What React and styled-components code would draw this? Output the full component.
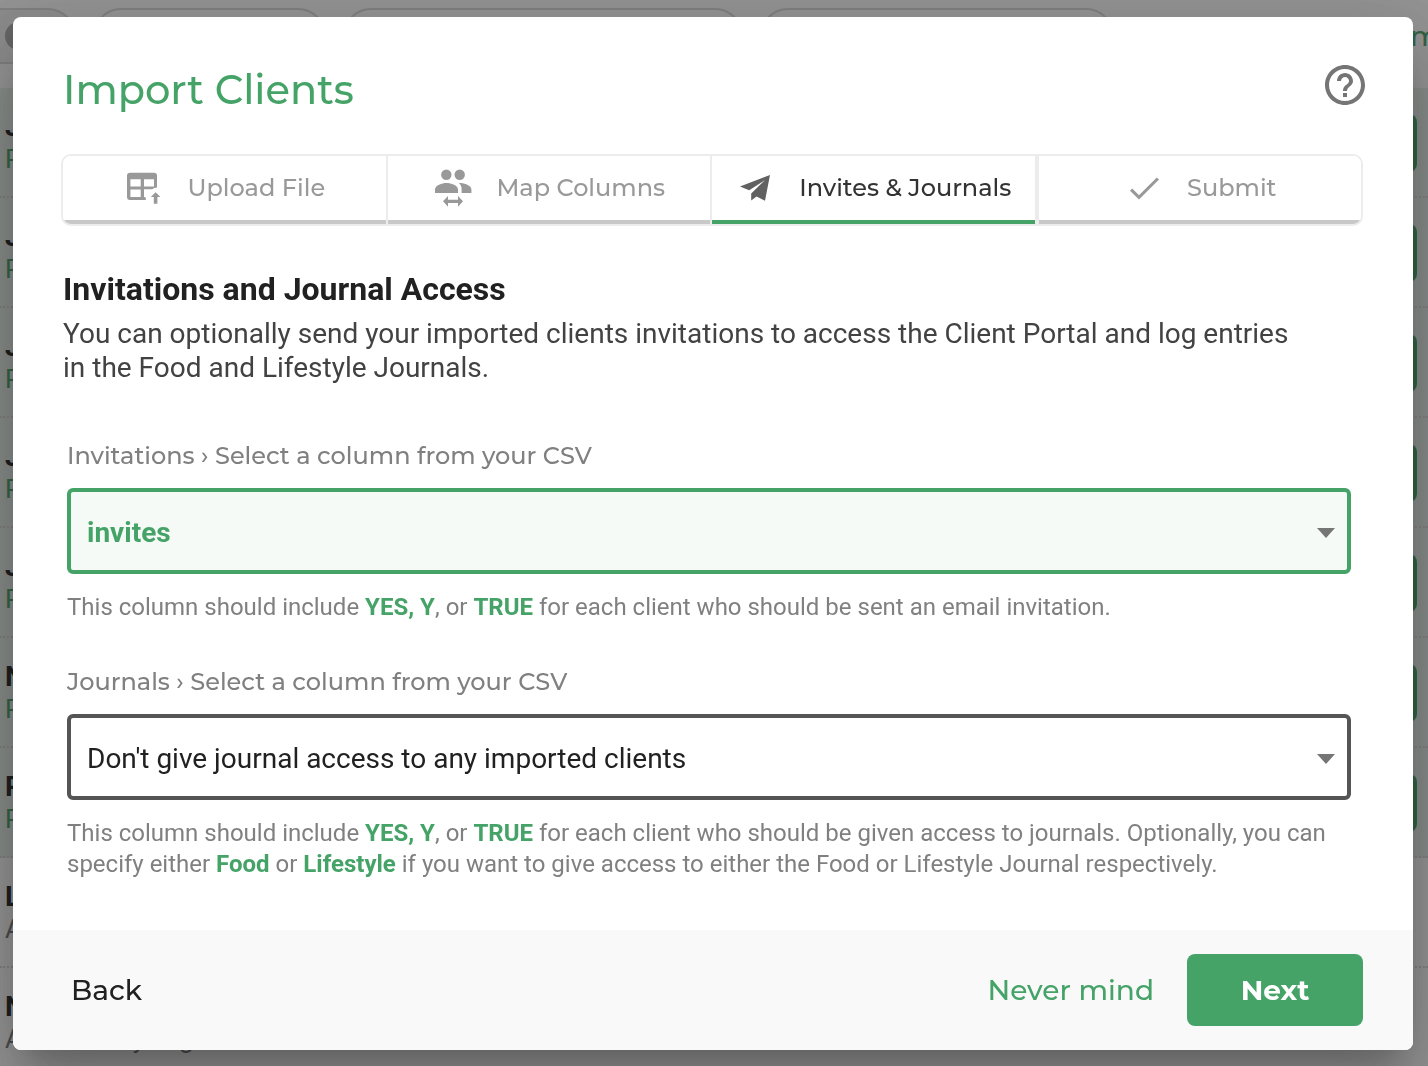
import React from "react";
import styled, { createGlobalStyle } from "styled-components";
import { MdHelpOutline } from "react-icons/md";

const green = "#45a368";
const headingFont = `"Montserrat", "Inter", sans-serif`;
const bodyFont = `"Roboto", sans-serif`;

const GlobalStyle = createGlobalStyle`
  * {
    box-sizing: border-box;
  }

  body {
    margin: 0;
    background: #fff;
    color: #212121;
    font-family: ${bodyFont};
  }

  button, select {
    margin: 0;
    font: inherit;
    cursor: pointer;
  }
`

/* Client list behind the dialog */
const Page = styled.div`
  height: 100vh;
  overflow: hidden;
`
const FilterBar = styled.div`
  display: flex;
  gap: 17px;
  height: 88px;
  padding-top: 8px;
`
const Chip = styled.div`
  flex: 0 1 ${({basis}) => basis}px;
  display: flex;
  align-items: center;
  height: 56px;
  padding-left: 5px;
  border: 2px solid #d8d8d8;
  border-left-width: ${({open}) => open ? 0 : "2px"};
  border-radius: ${({open}) => open ? "0 28px 28px 0" : "28px"};
  background: ${({open}) => open ? "#f0f0f0" : "#fff"};
`
const ChipRemove = styled.span`
  width: 28px;
  height: 28px;
  border-radius: 50%;
  background: #a6a6a6;
`
const MoreLink = styled.a`
  flex: none;
  width: 18px;
  margin-left: auto;
  color: ${green};
  font: 500 28px/56px ${headingFont};
  text-decoration: none;
`
const ClientRow = styled.div`
  display: flex;
  justify-content: space-between;
  align-items: center;
  height: 110px;
  padding: 2px 11px 0 5px;
  border-bottom: 2px dotted #dcd6d6;
  background: ${({pending}) => pending ? "#e8f1ec" : "#fff"};
`
const ClientName = styled.div`
  font-size: 28px;
  font-weight: 700;
  line-height: 32px;
`
const ClientStatus = styled.div`
  color: ${({pending}) => pending ? green : "#757575"};
  font-size: 26px;
  line-height: 32px;
`
const InviteBlock = styled.div`
  width: 140px;
  height: 58px;
  border-radius: 8px;
  background: ${green};
`

const Overlay = styled.div`
  position: fixed;
  inset: 0;
  padding: 17px 15px 16px 13px;
  overflow: auto;
  background: rgba(33, 33, 33, 0.48);
`
const Modal = styled.section`
  border-radius: 8px;
  overflow: hidden;
  background: #fff;
  box-shadow: 0 22px 30px -14px rgba(0, 0, 0, 0.2),
    0 48px 76px 6px rgba(0, 0, 0, 0.14),
    0 18px 92px 16px rgba(0, 0, 0, 0.12);
`
const ModalBody = styled.div`
  padding: 44px 50px 50px 48px;
`
const Header = styled.header`
  display: flex;
  justify-content: space-between;
  align-items: flex-start;
  margin-bottom: 39px;
`
const Title = styled.h1`
  margin: 0;
  padding: 4px 0 0 2px;
  color: ${green};
  font: 500 40px/50px ${headingFont};
`
const HelpButton = styled.button`
  display: flex;
  margin-right: -6px;
  padding: 0;
  border: 0;
  background: none;
  color: #757575;
`

const Steps = styled.nav`
  display: flex;
  height: 72px;
  border: 2px solid #ececec;
  border-radius: 10px;
  overflow: hidden;
`
const Step = styled.button`
  flex: 1 1 0;
  display: flex;
  justify-content: center;
  align-items: center;
  gap: 28px;
  padding: 0;
  border: 0;
  border-bottom: 4px solid ${({active}) => active ? green : "#c8c8c8"};
  background: #fff;
  color: ${({active}) => active ? "#333" : "#999"};
  font: 500 24px/32px ${headingFont};
  white-space: nowrap;
`
const StepDivider = styled.span`
  width: ${({wide}) => wide ? 4 : 2}px;
  background: #ececec;
`
const StepIcon = styled.svg`
  flex: none;
  width: 36px;
  height: 36px;
  overflow: visible;
  fill: ${({active}) => active ? "#616161" : "#999"};
`

const Intro = styled.div`
  margin-top: 42px;
  padding: 0 60px 0 2px;
`
const IntroTitle = styled.h2`
  margin: 0 0 7px;
  font-size: 32px;
  font-weight: 700;
  line-height: 42px;
`
const IntroText = styled.p`
  margin: 0;
  color: #424242;
  font-size: 28px;
  line-height: 34px;
`
const Field = styled.div`
  margin-top: ${({first}) => first ? 55 : 43}px;
  padding: 0 12px 0 6px;
`
const Label = styled.label`
  display: block;
  color: #808080;
  font: 500 24px/32px ${headingFont};
`
const SelectWrap = styled.div`
  position: relative;
  margin: 16px 0 18px;
`
const Select = styled.select`
  appearance: none;
  display: block;
  width: 100%;
  height: 86px;
  padding: 3px 60px 0 16px;
  border: 4px solid ${({filled}) => filled ? green : "#555"};
  border-radius: 6px;
  outline: 0;
  background: ${({filled}) => filled ? "#f5faf7" : "#fff"};
  color: ${({filled}) => filled ? green : "#212121"};
  font-size: 28px;
  font-weight: ${({filled}) => filled ? 700 : 400};
`
const Arrow = styled.svg`
  position: absolute;
  top: 40px;
  right: 16px;
  width: 18px;
  height: 10px;
  fill: #757575;
  pointer-events: none;
`
const Hint = styled.p`
  margin: 0;
  color: #808080;
  font-size: 24px;
  line-height: 31px;

  b {
    color: ${green};
  }
`

const Footer = styled.footer`
  display: flex;
  align-items: center;
  height: 120px;
  padding: 0 50px 0 58px;
  background: #f9f9f9;
`
const TextButton = styled.button`
  padding: 0;
  border: 0;
  background: none;
  color: ${({accent}) => accent ? green : "#212121"};
  font: 500 28px/36px ${headingFont};
`
const NextButton = styled.button`
  width: 176px;
  height: 72px;
  margin-left: 33px;
  border: 0;
  border-radius: 8px;
  background: ${green};
  color: #fff;
  font: 700 28px/36px ${headingFont};
`
const Spacer = styled.span`
  flex: 1;
`

const clients = [
  {name: "J", status: "P", pending: true},
  {name: "J", status: "P", pending: true},
  {name: "J", status: "P", pending: true},
  {name: "J", status: "P", pending: true},
  {name: "J", status: "P", pending: true},
  {name: "N", status: "P", pending: true},
  {name: "P", status: "P", pending: true},
  {name: "L", status: "Active 2 days ago"},
  {name: "N", status: "Active 2 days ago"},
]

const UploadIcon = () => (
  <StepIcon viewBox="-2 0 36 36" aria-hidden="true">
    <path fillRule="evenodd" d="M5 2.8H29Q32 2.8 32 5.8V17.6Q29 17.7 27.2 19.3H19V27L20.8 27.5V30H5Q2 30 2 27V5.8Q2 2.8 5 2.8ZM5.4 9.2V16.4H15.7V9.2ZM19 9.2V16.4H29V9.2ZM5.4 19.4V27H15.7V19.4Z"/>
    <path d="M30.6 22.3L35.4 27H32.4V33.7H28.8V27H25.8Z"/>
  </StepIcon>
)

const ColumnsIcon = () => (
  <StepIcon viewBox="-2 0 36 36" aria-hidden="true">
    <circle cx="12.3" cy="4.7" r="5.2"/>
    <circle cx="25.7" cy="4.7" r="5.2"/>
    <path d="M1 23V19.6C1 15.2 8 13 12.5 13S24 15.2 24 19.6V23Z"/>
    <path d="M24.8 13C27 14.6 27.6 17 27.6 19.4V23H37.4V19.6C37.4 15.2 30 12.8 24.8 13Z"/>
    <path d="M9 31.3L14 26V29.7H24V26L29 31.3L24 36.7V33H14V36.7Z"/>
  </StepIcon>
)

const PlaneIcon = () => (
  <StepIcon active viewBox="-1 0 36 36" aria-hidden="true">
    <path d="M4 16.6L34 5L29 30.8L20.6 26.6L15.2 30.4V23.6L29 10L13.2 20.2Z"/>
  </StepIcon>
)

const CheckIcon = () => (
  <StepIcon viewBox="-1 0 36 36" aria-hidden="true">
    <path d="M6 20.7L8.2 18.5L15 25.2L32.8 7.4L35 9.6L15 29.5Z"/>
  </StepIcon>
)

const steps = [
  {label: "Upload File", Icon: UploadIcon},
  {label: "Map Columns", Icon: ColumnsIcon},
  {label: "Invites & Journals", Icon: PlaneIcon, active: true},
  {label: "Submit", Icon: CheckIcon, wide: true},
]

const SelectField = ({id, label, value, filled, first, children}) => (
  <Field first={first}>
    <Label htmlFor={id}>{label}</Label>
    <SelectWrap>
      <Select id={id} filled={filled} defaultValue={value}>
        <option>{value}</option>
      </Select>
      <Arrow viewBox="0 0 18 10" aria-hidden="true">
        <path d="M0 0H18L9 10Z"/>
      </Arrow>
    </SelectWrap>
    <Hint>{children}</Hint>
  </Field>
)

const ClientList = () => (
  <Page>
    <FilterBar>
      <Chip basis={76} open><ChipRemove/></Chip>
      <Chip basis={233}/>
      <Chip basis={400}/>
      <Chip basis={354}/>
      <MoreLink href="#more">m</MoreLink>
    </FilterBar>
    {
      clients.map((client, index) => (
        <ClientRow key={index} pending={client.pending}>
          <div>
            <ClientName>{client.name}</ClientName>
            <ClientStatus pending={client.pending}>{client.status}</ClientStatus>
          </div>
          {client.pending && <InviteBlock/>}
        </ClientRow>
      ))
    }
  </Page>
)

const App = () => (
  <>
    <GlobalStyle/>
    <ClientList/>
    <Overlay>
      <Modal role="dialog" aria-labelledby="import-title">
        <ModalBody>
          <Header>
            <Title id="import-title">Import Clients</Title>
            <HelpButton type="button" aria-label="Help">
              <MdHelpOutline size={48}/>
            </HelpButton>
          </Header>
          <Steps>
            {
              steps.map(({label, Icon, active, wide}, index) => (
                <React.Fragment key={label}>
                  {index > 0 && <StepDivider wide={wide}/>}
                  <Step type="button" active={active}>
                    <Icon/>
                    {label}
                  </Step>
                </React.Fragment>
              ))
            }
          </Steps>
          <Intro>
            <IntroTitle>Invitations and Journal Access</IntroTitle>
            <IntroText>
              You can optionally send your imported clients invitations to access the
              Client Portal and log entries in the Food and Lifestyle Journals.
            </IntroText>
          </Intro>
          <SelectField
            first
            filled
            id="invitations"
            label="Invitations › Select a column from your CSV"
            value="invites"
          >
            This column should include <b>YES, Y</b>, or <b>TRUE</b> for each client who
            should be sent an email invitation.
          </SelectField>
          <SelectField
            id="journals"
            label="Journals › Select a column from your CSV"
            value="Don't give journal access to any imported clients"
          >
            This column should include <b>YES, Y</b>, or <b>TRUE</b> for each client who
            should be given access to journals. Optionally, you can specify
            either <b>Food</b> or <b>Lifestyle</b> if you want to give access to either
            the Food or Lifestyle Journal respectively.
          </SelectField>
        </ModalBody>
        <Footer>
          <TextButton type="button">Back</TextButton>
          <Spacer/>
          <TextButton type="button" accent>Never mind</TextButton>
          <NextButton type="button">Next</NextButton>
        </Footer>
      </Modal>
    </Overlay>
  </>
)

export default App
